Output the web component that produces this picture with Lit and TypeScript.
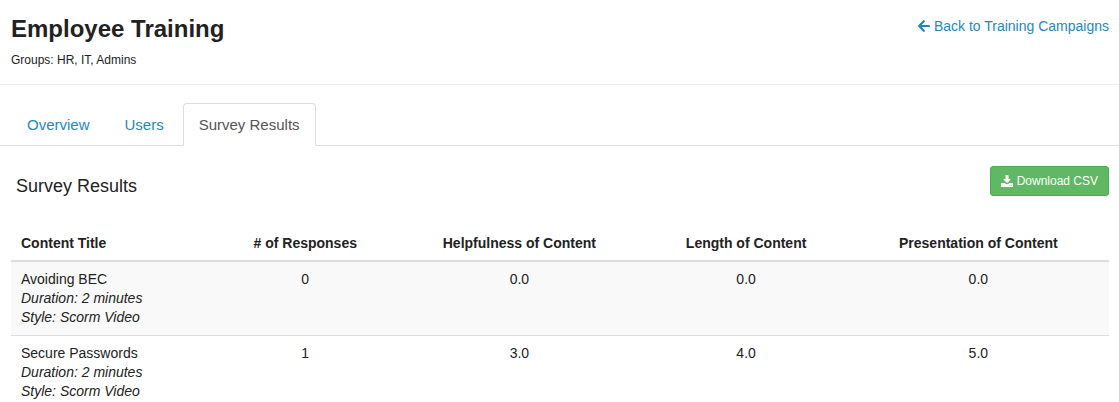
import { LitElement, html, css } from "lit";
import { customElement } from "lit/decorators.js";

interface SurveyRow {
  title: string;
  duration: string;
  style: string;
  responses: number;
  scores: string[];
}

const COLUMNS = [
  "Content Title",
  "# of Responses",
  "Helpfulness of Content",
  "Length of Content",
  "Presentation of Content",
];

const ROWS: SurveyRow[] = [
  { title: "Avoiding BEC", duration: "2 minutes", style: "Scorm Video", responses: 0, scores: ["0.0", "0.0", "0.0"] },
  { title: "Secure Passwords", duration: "2 minutes", style: "Scorm Video", responses: 1, scores: ["3.0", "4.0", "5.0"] },
];

@customElement("app-root")
export class AppRoot extends LitElement {
  static styles = css`
    :host {
      display: block;
      background: #fff;
      color: #222;
      font: 14px/19px "Helvetica Neue", Helvetica, "Liberation Sans", Arial, sans-serif;
    }
    * { box-sizing: border-box; }
    a { color: #1d87c4; text-decoration: none; }
    .top {
      display: flex;
      justify-content: space-between;
      align-items: flex-start;
      padding: 13px 10px 15px 11px;
      border-bottom: 1px solid #eee;
    }
    h1 { margin: 0; font-size: 24px; line-height: 32px; font-weight: 700; }
    .groups { margin: 7px 0 0; font-size: 12px; line-height: 17px; }
    .back {
      display: flex;
      align-items: center;
      gap: 4px;
      padding-top: 3px;
      font-size: 14px;
      line-height: 20px;
    }
    .back svg { width: 12px; height: 12px; }
    .tabs {
      display: flex;
      gap: 3px;
      margin-top: 18px;
      padding-left: 11px;
      border-bottom: 1px solid #ddd;
    }
    .tab {
      margin-bottom: -1px;
      padding: 10px 15px;
      border: 1px solid transparent;
      border-radius: 4px 4px 0 0;
      font-size: 15px;
      line-height: 21px;
    }
    .tab.active {
      color: #555;
      background: #fff;
      border-color: #ddd #ddd #fff;
    }
    .bar {
      display: flex;
      justify-content: space-between;
      align-items: flex-start;
      padding: 20px 10px 0 16px;
    }
    h2 { margin: 10px 0 0; font-size: 18px; line-height: 20px; font-weight: 500; }
    button {
      display: flex;
      align-items: center;
      gap: 4px;
      height: 30px;
      padding: 0 10px;
      border: 1px solid #4cae4c;
      border-radius: 3px;
      background: #60b864;
      color: #fff;
      font: inherit;
      font-size: 12px;
      line-height: 18px;
      cursor: pointer;
    }
    button svg { width: 12px; height: 12px; }
    .results { padding: 30px 10px 0 11px; }
    table { width: 100%; border-collapse: collapse; }
    th, td { padding: 8px 10px; text-align: center; vertical-align: top; }
    th:first-child, td:first-child { text-align: left; }
    th { padding-bottom: 7px; border-bottom: 2px solid #ddd; font-weight: 700; }
    th:nth-child(1) { width: 18.7%; }
    th:nth-child(2) { width: 16.2%; }
    th:nth-child(3) { width: 22.8%; }
    th:nth-child(4) { width: 18.5%; }
    th:nth-child(5) { width: 23.8%; }
    td { border-top: 1px solid #ddd; }
    tbody tr:nth-child(odd) { background: #f9f9f9; }
    em { display: block; }
  `;

  render() {
    return html`
      <header class="top">
        <div>
          <h1>Employee Training</h1>
          <p class="groups">Groups: HR, IT, Admins</p>
        </div>
        <a class="back" href="#campaigns">
          <svg viewBox="0 0 12 12" fill="none" stroke="currentColor" stroke-width="2.2" stroke-linecap="round" stroke-linejoin="round" aria-hidden="true">
            <path d="M5.8 1.2 1.2 6 5.8 10.8M1.5 6H11" />
          </svg>
          <span>Back to Training Campaigns</span>
        </a>
      </header>
      <nav class="tabs">
        <a class="tab" href="#overview">Overview</a>
        <a class="tab" href="#users">Users</a>
        <a class="tab active" href="#survey" aria-current="page">Survey Results</a>
      </nav>
      <div class="bar">
        <h2>Survey Results</h2>
        <button type="button">
          <svg viewBox="0 0 12 12" fill="currentColor" aria-hidden="true">
            <path d="M4.5 0.4Q4.5 0 4.9 0H7.1Q7.5 0 7.5 0.4V4H9.4Q10 4 9.6 4.5L6.4 7.7Q6 8 5.6 7.7L2.4 4.5Q2 4 2.6 4H4.5Z" />
            <path fill-rule="evenodd" d="M0.5 8H3.8L5 9Q6 9.7 7 9L8.2 8H11.5Q12 8 12 8.5V11.5Q12 12 11.5 12H0.5Q0 12 0 11.5V8.5Q0 8 0.5 8ZM8.3 10.2V11H9.1V10.2ZM10.1 10.2V11H10.9V10.2Z" />
          </svg>
          <span>Download CSV</span>
        </button>
      </div>
      <div class="results">
        <table>
          <thead>
            <tr>${COLUMNS.map((c) => html`<th scope="col">${c}</th>`)}</tr>
          </thead>
          <tbody>
            ${ROWS.map(
              (r) => html`<tr>
                <td>${r.title}<em>Duration: ${r.duration}</em><em>Style: ${r.style}</em></td>
                <td>${r.responses}</td>
                ${r.scores.map((s) => html`<td>${s}</td>`)}
              </tr>`
            )}
          </tbody>
        </table>
      </div>
    `;
  }
}
